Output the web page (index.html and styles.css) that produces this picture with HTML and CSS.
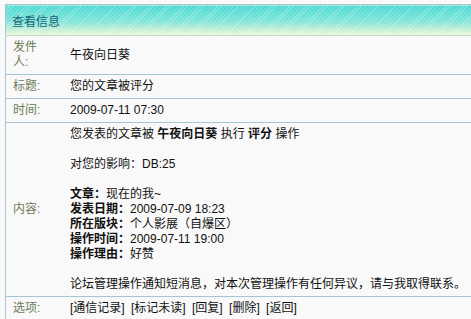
FILE: index.html
```html
<!DOCTYPE html>
<html lang="zh-CN">
<head>
    <meta charset="UTF-8">
    <title>查看信息</title>
    <link rel="stylesheet" href="styles.css">
</head>
<body>
    <table class="msg">
        <tr>
            <th class="msg-head" colspan="2">查看信息</th>
        </tr>
        <tr>
            <td class="label">发件人:</td>
            <td>午夜向日葵</td>
        </tr>
        <tr>
            <td class="label">标题:</td>
            <td>您的文章被评分</td>
        </tr>
        <tr>
            <td class="label">时间:</td>
            <td>2009-07-11 07:30</td>
        </tr>
        <tr>
            <td class="label">内容:</td>
            <td>
                您发表的文章被 <b>午夜向日葵</b> 执行 <b>评分</b> 操作<br>
                <br>
                对您的影响：DB:25<br>
                <br>
                <b>文章：</b>现在的我~<br>
                <b>发表日期：</b>2009-07-09 18:23<br>
                <b>所在版块：</b>个人影展（自爆区）<br>
                <b>操作时间：</b>2009-07-11 19:00<br>
                <b>操作理由：</b>好赞<br>
                <br>
                论坛管理操作通知短消息，对本次管理操作有任何异议，请与我取得联系。
            </td>
        </tr>
        <tr>
            <td class="label">选项:</td>
            <td class="options">
                <a href="#">[通信记录]</a>
                <a href="#">[标记未读]</a>
                <a href="#">[回复]</a>
                <a href="#">[删除]</a>
                <a href="#">[返回]</a>
            </td>
        </tr>
    </table>
</body>
</html>
```

FILE: styles.css
```css
body {
    margin: 4px 0 0 5px;
    background-color: #f9f9f9;
    font-family: "Liberation Sans", "Noto Sans CJK SC", sans-serif;
    font-size: 12px;
    color: #111;
    overflow: hidden;
}

.msg {
    width: 480px;
    border-collapse: collapse;
    border-top: 1px solid #a6c6d6;
    border-left: 1px solid #a6c6d6;
}

.msg-head {
    height: 30px;
    padding: 0 0 0 6px;
    text-align: left;
    font-weight: normal;
    color: #1b6476;
    border-bottom: 1px solid #b5dcc8;
    background:
        repeating-linear-gradient(-45deg, rgba(255, 255, 255, 0.35) 0 1px, transparent 1px 3px),
        linear-gradient(#44d8d2, #7ee4d8 55%, #f2f8d2);
}

.msg td {
    padding: 4px 6px 4px 7px;
    line-height: 15px;
    vertical-align: middle;
    border-bottom: 1px solid #a6c6d6;
}

.msg td.label {
    width: 33px;
    padding-right: 17px;
    color: #6d7b57;
}

.options {
    word-spacing: 3px;
}

.options a {
    color: #111;
    text-decoration: none;
}
```
